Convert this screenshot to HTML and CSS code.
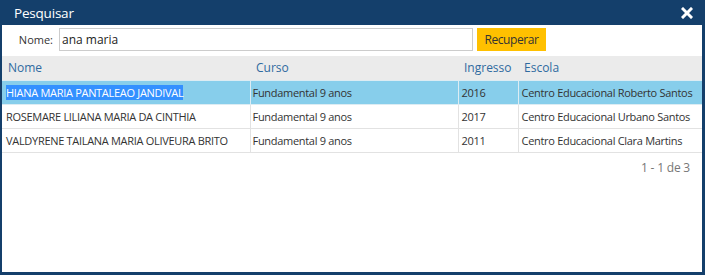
FILE: index.html
```html
<!DOCTYPE html>
<html lang="pt">
<head>
<meta charset="utf-8">
<title>Pesquisar</title>
<link rel="stylesheet" href="styles.css">
</head>
<body>
<div class="window">
  <div class="titlebar">
    <span class="title">Pesquisar</span>
    <span class="close">
      <svg width="12" height="12" viewBox="0 0 12 12"><path d="M2 2 L10 10 M10 2 L2 10" stroke="#fff" stroke-width="3" stroke-linecap="square"/></svg>
    </span>
  </div>
  <div class="content">
    <div class="search">
      <label class="label" for="nome">Nome:</label>
      <input id="nome" class="input" type="text" value="ana maria">
      <button class="btn">Recuperar</button>
    </div>
    <table class="grid">
      <colgroup>
        <col class="c1"><col class="c2"><col class="c3"><col class="c4">
      </colgroup>
      <thead>
        <tr><th>Nome</th><th>Curso</th><th>Ingresso</th><th>Escola</th></tr>
      </thead>
      <tbody>
        <tr class="sel"><td><span class="hl">HIANA MARIA PANTALEAO JANDIVAL</span></td><td>Fundamental 9 anos</td><td>2016</td><td>Centro Educacional Roberto Santos</td></tr>
        <tr><td>ROSEMARE LILIANA MARIA DA CINTHIA</td><td>Fundamental 9 anos</td><td>2017</td><td>Centro Educacional Urbano Santos</td></tr>
        <tr><td>VALDYRENE TAILANA MARIA OLIVEURA BRITO</td><td>Fundamental 9 anos</td><td>2011</td><td>Centro Educacional Clara Martins</td></tr>
      </tbody>
    </table>
    <div class="pager">1 - 1 de 3</div>
  </div>
</div>
</body>
</html>
```
FILE: styles.css
```css
* { box-sizing: border-box; }
html, body { margin: 0; padding: 0; }
body {
  width: 705px;
  height: 275px;
  overflow: hidden;
  font-family: "Open Sans", "Noto Sans", sans-serif;
  font-size: 11px;
  color: #333;
}
.window {
  width: 705px;
  height: 275px;
  background: #143f6b;
  padding: 0 3px 3px 2px;
  display: flex;
  flex-direction: column;
}
.titlebar {
  height: 25px;
  display: flex;
  align-items: center;
  justify-content: space-between;
  padding: 0 9px 0 12px;
  color: #fff;
}
.title { font-size: 13.5px; letter-spacing: -0.2px; }
.close { display: flex; align-items: center; }
.content {
  flex: 1;
  background: #fff;
  display: flex;
  flex-direction: column;
}
.search {
  display: flex;
  align-items: center;
  height: 23px;
  margin-top: 3px;
}
.label {
  width: 54px;
  text-align: right;
  padding-right: 3px;
  font-size: 11px;
}
.input {
  width: 414px;
  height: 23px;
  margin-left: 3px;
  border: 1px solid #ccc;
  padding: 0 2px;
  font-family: inherit;
  font-size: 12px;
  color: #222;
  outline: none;
}
.btn {
  margin-left: 4px;
  width: 69px;
  height: 23px;
  background: #ffc000;
  border: none;
  font-family: inherit;
  font-size: 12px;
  letter-spacing: -0.4px;
  color: #333;
  padding: 0;
}
.grid {
  margin-top: 5px;
  width: 700px;
  border-collapse: collapse;
  table-layout: fixed;
}
.c1 { width: 248px; }
.c2 { width: 208px; }
.c3 { width: 60px; }
.c4 { width: 184px; }
.grid th {
  background: #ebebeb;
  color: #2f6aa0;
  font-weight: normal;
  text-align: left;
  height: 24px;
  padding: 0 6px;
  font-size: 12px;
}
.grid td {
  height: 24px;
  padding: 0 2px;
  white-space: nowrap;
  overflow: hidden;
  border: 1px solid #e2e2e2;
  font-size: 11px;
  letter-spacing: -0.3px;
}
.grid td:first-child { border-left: none; padding-left: 4px; }
.grid td:nth-child(3), .grid td:nth-child(4) { padding-left: 3px; }
.grid td:last-child { border-right: none; }
.grid tr.sel td { background: #87ceeb; border-color: #dcecf3; }
.hl { background: #3390ff; color: #fff; }
.pager {
  text-align: right;
  padding-right: 12px;
  margin-top: 6px;
  color: #777;
  font-size: 12px;
  letter-spacing: -0.2px;
}
```
